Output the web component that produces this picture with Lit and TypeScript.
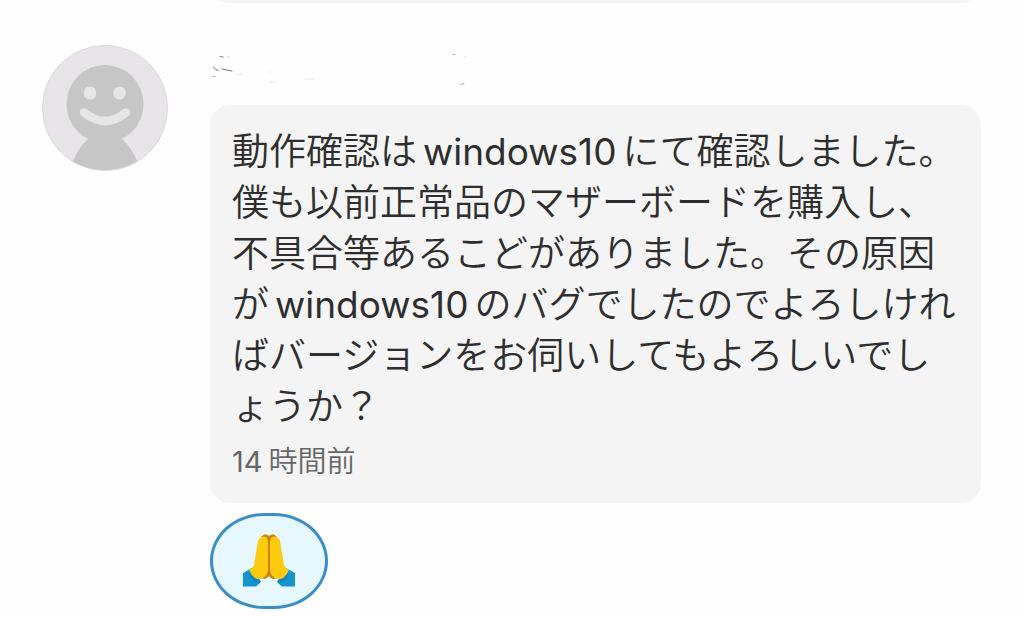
import { LitElement, html, css } from "lit";
import { customElement, property } from "lit/decorators.js";

@customElement("user-avatar")
class UserAvatar extends LitElement {
  static styles = css`
    :host { display: block; }
    svg { display: block; width: 100%; height: auto; }
  `;
  render() {
    return html`<svg viewBox="0 0 126 126" role="img" aria-label="avatar">
      <defs><clipPath id="disc"><circle cx="63" cy="63" r="62.5" /></clipPath></defs>
      <circle cx="63" cy="63" r="62.5" fill="#e7e5e7" />
      <g clip-path="url(#disc)" fill="#c6c6c6">
        <ellipse cx="63" cy="59" rx="38.5" ry="39" />
        <path d="M46 94 L80 94 Q90 103 96 118 L96 128 H30 V118 Q36 103 46 94 Z" />
      </g>
      <circle cx="63" cy="63" r="62.5" fill="none" stroke="#dad8da" stroke-width="1" />
      <g fill="#e7e5e7"><ellipse cx="48" cy="48" rx="6.3" ry="6.6" /><ellipse cx="77.500" cy="48" rx="6.3" ry="6.6" /></g>
      <path d="M42 67.500 Q63 84.500 84 67.500" fill="none" stroke="#e7e5e7" stroke-width="8.5" stroke-linecap="round" />
    </svg>`;
  }
}

@customElement("reaction-button")
class ReactionButton extends LitElement {
  static styles = css`
    :host { display: block; }
    button {
      display: flex; align-items: center; justify-content: center;
      width: 118px; height: 96px; padding: 0; margin: 0;
      border: 3px solid #3b8dc6; border-radius: 54px / 48px;
      background: #e6f7fe; cursor: pointer;
    }
    svg { width: 54px; height: 54px; }
  `;
  render() {
    return html`<button type="button" aria-label="🙏" aria-pressed="true">
      <svg viewBox="0 0 54 54" aria-hidden="true">
        <path d="M1 39 L10 34 L18 46 L18 49 L14 52.500 H1 Z M53 39 L44 34 L36 46 L36 49 L40 52.500 H53 Z" fill="#1494cf" />
        <path d="M9 34 L11 42 Q14 46 19 47 L18 49 Q10 48 8 42 Z M45 34 L43 42 Q40 46 35 47 L36 49 Q44 48 46 42 Z" fill="#1284b8" />
        <path d="M19 3 Q23 -2 27 2 Q31 -2 35 3 L36 38 Q35 46 31 45 Q28 44 27 42 Q26 44 23 45 L18 44 Z" fill="#c8870a" />
        <path d="M18 4 Q22 1 25 4 Q26 6 26 10 V35 Q26 41 21 44 Q17 46 13 44 Q9 41 7 36 Q11 34 12 31 L16 7 Q16.500 5 18 4 Z" fill="#fccb10" />
        <path d="M36 4 Q32 1 29 4 Q28 6 28 10 V35 Q28 41 33 44 Q37 46 41 44 Q45 41 47 36 Q43 34 42 31 L38 7 Q37.500 5 36 4 Z" fill="#fccb10" />
      </svg>
    </button>`;
  }
}

@customElement("chat-message")
class ChatMessage extends LitElement {
  @property({ attribute: false }) parts: string[] = [];

  static styles = css`
    :host { display: flex; align-items: flex-start; gap: 42px; }
    user-avatar { flex: none; width: 126px; }
    .body { flex: 1; min-width: 0; }
    .name { height: 60px; }
    .name svg { display: block; width: 260px; height: 50px; }
    .bubble {
      background: #f4f4f4; border-radius: 20px;
      padding: 21px 22px;
    }
    p { margin: 0; font-size: 37px; line-height: 51px; color: #2e2e2e; font-weight: 350; line-break: loose; }
    .latin { font-weight: 400; margin-inline: 6px; }
    time { display: block; margin-top: 10px; font-size: 29px; line-height: 40px; color: #666; font-weight: 350; }
    time .latin { margin-inline-start: 0; }
    reaction-button { margin-top: 10px; }
  `;
  render() {
    return html`
      <user-avatar></user-avatar>
      <div class="body">
        <div class="name">
          <svg viewBox="0 0 260 50" fill="none" stroke-linecap="round" aria-hidden="true">
            <path d="M10 11.500 L13 12 M3.500 22 Q5 25 8 25.500 M12 24 L22 26" stroke="#777" />
            <path d="M18 12 h1 M3 31.500 h2 M243 9.500 h2 M251 39.500 L254 38.500" stroke="#aaa" />
            <path d="M27 29.500 h5 M60 27 h1 M60 37 h5 M95 34 h9 M255 11.500 h1" stroke="#e6e6e6" />
          </svg>
        </div>
        <div class="bubble">
          <p>${this.parts.map((t) => (/^[\x20-\x7e]+$/.test(t) ? html`<span class="latin">${t}</span>` : t))}</p>
          <time><span class="latin">14</span>時間前</time>
        </div>
        <reaction-button></reaction-button>
      </div>`;
  }
}

@customElement("app-root")
class AppRoot extends LitElement {
  static styles = css`
    :host {
      display: block; background: #fefefe; min-height: 100vh; overflow: hidden;
      font-family: Inter, "Noto Sans CJK JP", sans-serif;
    }
    .previous { height: 3px; margin: 0 43px 0 210px; display: flex; align-items: flex-end; overflow: hidden; }
    .previous-bubble { flex: 1; height: 60px; border-radius: 20px; background: #f4f4f4; }
    chat-message { margin: 42px 43px 0 42px; }
  `;
  render() {
    return html`<main lang="ja">
      <div class="previous"><div class="previous-bubble"></div></div>
      <chat-message
        .parts=${[
          "動作確認は",
          "windows10",
          "にて確認しました。僕も以前正常品のマザーボードを購入し、不具合等あるこどがありました。その原因が",
          "windows10",
          "のバグでしたのでよろしければバージョンをお伺いしてもよろしいでしょうか？",
        ]}
      ></chat-message>
    </main>`;
  }
}
